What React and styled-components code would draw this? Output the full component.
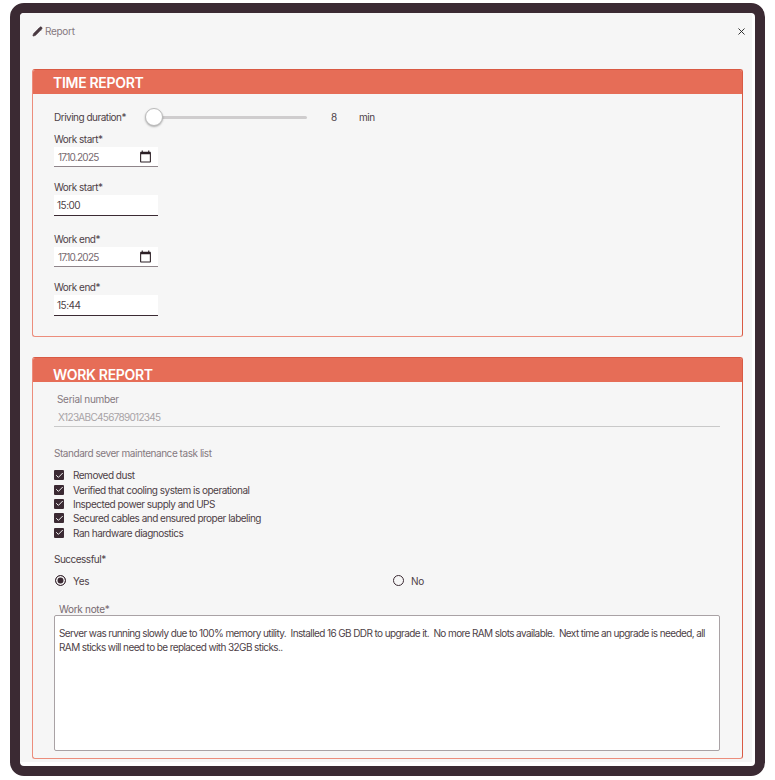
import React from "react";
import styled, { createGlobalStyle } from "styled-components";
import { Pencil, X, Check } from "lucide-react";
import { MdCalendarToday } from "react-icons/md";

const GlobalStyle = createGlobalStyle`
  body {
    margin: 0;
    background: #fff;
    font-family: Inter, "Liberation Sans", sans-serif;
    color: #3b2a33;
  }
`;

const tasks = [
  "Removed dust",
  "Verified that cooling system is operational",
  "Inspected power supply and UPS",
  "Secured cables and ensured proper labeling",
  "Ran hardware diagnostics",
];

const note =
  "Server was running slowly due to 100% memory utility.  Installed 16 GB DDR to upgrade it.  No more RAM slots available.  Next time an upgrade is needed, all RAM sticks will need to be replaced with 32GB sticks..";

const App = () => {
  return (
    <>
      <GlobalStyle />
      <Frame>
        <Dialog>
          <Header>
            <HeaderTitle>
              <Pencil size={11} fill="#4a3a42" strokeWidth={1.5} />
              <span>Report</span>
            </HeaderTitle>
            <X size={11} strokeWidth={2} color="#222" />
          </Header>

          <Section $height={268}>
            <SectionTitle>TIME REPORT</SectionTitle>
            <TimeBody>
              <SliderRow>
                <FieldLabel>Driving duration*</FieldLabel>
                <Track>
                  <Thumb />
                </Track>
                <SliderValue>8</SliderValue>
                <FieldLabel>min</FieldLabel>
              </SliderRow>
              <DateField label="Work start*" value="17.10.2025" first />
              <TimeField label="Work start*" value="15:00" />
              <DateField label="Work end*" value="17.10.2025" />
              <TimeField label="Work end*" value="15:44" />
            </TimeBody>
          </Section>

          <Section $height={402}>
            <SectionTitle $low>WORK REPORT</SectionTitle>
            <WorkBody>
              <SerialField>
                <SerialLabel>Serial number</SerialLabel>
                <SerialValue>X123ABC456789012345</SerialValue>
              </SerialField>
              <ListLabel>Standard sever maintenance task list</ListLabel>
              <TaskList>
                {tasks.map((task) => (
                  <Task key={task}>
                    <CheckBox>
                      <Check size={9} strokeWidth={2.5} color="#fff" />
                    </CheckBox>
                    {task}
                  </Task>
                ))}
              </TaskList>
              <SuccessLabel>Successful*</SuccessLabel>
              <RadioRow>
                <RadioOption>
                  <Radio $checked />
                  Yes
                </RadioOption>
                <RadioOption>
                  <Radio />
                  No
                </RadioOption>
              </RadioRow>
              <NoteLabel>Work note*</NoteLabel>
              <NoteBox>{note}</NoteBox>
            </WorkBody>
          </Section>
        </Dialog>
      </Frame>
    </>
  );
};

const DateField = ({ label, value, first }) => (
  <Field $gap={first ? 5 : 16}>
    <FieldLabel>{label}</FieldLabel>
    <InputBox $muted>
      <DateText>{value}</DateText>
      <MdCalendarToday size={13} color="#2b1f25" />
    </InputBox>
  </Field>
);

const TimeField = ({ label, value }) => (
  <Field $gap={13}>
    <FieldLabel>{label}</FieldLabel>
    <InputBox $time>
      <TimeText>{value}</TimeText>
    </InputBox>
  </Field>
);

const Frame = styled.div`
  box-sizing: border-box;
  width: 755px;
  height: 773px;
  margin: 3px 0 0 10px;
  border: 10px solid #3b2a33;
  border-radius: 14px;
  background: #fff;
  overflow: hidden;
`;
const Dialog = styled.div`
  box-sizing: border-box;
  height: 749px;
  width: 732px;
  background: #f6f6f6;
  padding: 0 0 0 12px;
  display: flex;
  flex-direction: column;
  gap: 20px;
`;
const Header = styled.div`
  height: 36px;
  padding: 0 5px 0 0;
  display: flex;
  align-items: center;
  justify-content: space-between;
`;
const HeaderTitle = styled.div`
  display: flex;
  align-items: center;
  gap: 2px;
  font-size: 10px;
  letter-spacing: -0.3px;
  color: #85797f;
  svg {
    color: #4a3a42;
  }
`;
const Section = styled.section`
  box-sizing: border-box;
  width: 711px;
  height: ${(p) => p.$height}px;
  border: 1px solid #ec8d7c;
  border-top-color: #d95a44;
  border-right-color: #d95a44;
  border-radius: 3px;
  overflow: hidden;
  flex-shrink: 0;
`;
const SectionTitle = styled.h2`
  box-sizing: border-box;
  margin: 0;
  height: 24px;
  padding: ${(p) => (p.$low ? "8px" : "4px")} 0 0 20px;
  background: #e66d57;
  color: #fff;
  font-size: 14px;
  line-height: 18px;
  font-weight: 600;
  letter-spacing: -0.3px;
`;
const TimeBody = styled.div`
  padding: 13px 0 0 21px;
`;
const SliderRow = styled.div`
  display: flex;
  align-items: center;
  height: 20px;
`;
const FieldLabel = styled.span`
  display: block;
  font-size: 10px;
  letter-spacing: -0.5px;
  line-height: 14px;
  color: #4e3f47;
`;
const Track = styled.div`
  position: relative;
  width: 153px;
  height: 3px;
  margin-left: 28px;
  background: #cfcdce;
  border-radius: 2px;
`;
const Thumb = styled.div`
  position: absolute;
  left: -9px;
  top: -7.5px;
  box-sizing: border-box;
  width: 18px;
  height: 18px;
  border-radius: 50%;
  background: #fff;
  border: 1px solid #bbb;
  box-shadow: 0 1px 2px rgba(0, 0, 0, 0.3);
`;
const SliderValue = styled.span`
  width: 28px;
  margin-left: 24px;
  font-size: 10px;
  color: #4e3f47;
`;
const Field = styled.div`
  width: 104px;
  margin-top: ${(p) => p.$gap}px;
`;
const InputBox = styled.div`
  box-sizing: border-box;
  height: ${(p) => (p.$time ? "21px" : "20px")};
  margin-top: 1px;
  padding: 0 6px 0 3px;
  display: flex;
  align-items: center;
  justify-content: space-between;
  background: #fff;
  border-bottom: 1px solid ${(p) => (p.$muted ? "#8f858a" : "#3b2a33")};
  font-size: 10px;
  color: #4e3f47;
`;
const DateText = styled.span`
  color: #76696f;
  padding-left: 1px;
  letter-spacing: -0.75px;
`;
const TimeText = styled.span`
  letter-spacing: -0.5px;
`;
const WorkBody = styled.div`
  padding: 10px 21px 0 21px;
`;
const SerialField = styled.div`
  width: 666px;
  box-sizing: border-box;
  height: 35px;
  border-bottom: 1px solid #c9c9c9;
`;
const SerialLabel = styled.div`
  padding-left: 3px;
  font-size: 10px;
  letter-spacing: -0.3px;
  line-height: 14px;
  color: #85797f;
`;
const SerialValue = styled.div`
  padding: 4px 0 0 4px;
  font-size: 10px;
  letter-spacing: -0.7px;
  line-height: 14px;
  color: #a8a3a6;
`;
const ListLabel = styled.div`
  margin-top: 19px;
  font-size: 10px;
  letter-spacing: -0.45px;
  line-height: 14px;
  color: #85797f;
`;
const TaskList = styled.div`
  margin-top: 8px;
`;
const Task = styled.div`
  display: flex;
  align-items: center;
  gap: 9px;
  height: 14.4px;
  font-size: 10px;
  letter-spacing: -0.5px;
  color: #4e3f47;
`;
const CheckBox = styled.span`
  width: 10px;
  height: 10px;
  border-radius: 1px;
  background: #3b2a33;
  display: flex;
  align-items: center;
  justify-content: center;
`;
const SuccessLabel = styled(FieldLabel)`
  margin-top: 12px;
`;
const RadioRow = styled.div`
  display: grid;
  grid-template-columns: 338px 1fr;
  margin-top: 8px;
  height: 14px;
`;
const RadioOption = styled.label`
  display: flex;
  align-items: center;
  gap: 7px;
  padding-left: 1px;
  font-size: 10px;
  letter-spacing: -0.3px;
  color: #4e3f47;
`;
const Radio = styled.span`
  box-sizing: border-box;
  width: 11px;
  height: 11px;
  border-radius: 50%;
  border: 1.3px solid #3b2a33;
  background: ${(p) => (p.$checked ? "#3b2a33" : "transparent")};
  box-shadow: ${(p) => (p.$checked ? "inset 0 0 0 1.5px #f6f6f6" : "none")};
`;
const NoteLabel = styled.div`
  margin-top: 15px;
  padding-left: 5px;
  font-size: 10px;
  letter-spacing: -0.3px;
  line-height: 12px;
  color: #76696f;
`;
const NoteBox = styled.div`
  box-sizing: border-box;
  width: 666px;
  height: 136px;
  padding: 10px 4px;
  background: #fff;
  border: 1px solid #a9a2a5;
  border-radius: 2px;
  font-size: 10px;
  letter-spacing: -0.6px;
  line-height: 14.5px;
  color: #4e3f47;
  white-space: pre-wrap;
`;

export default App;
